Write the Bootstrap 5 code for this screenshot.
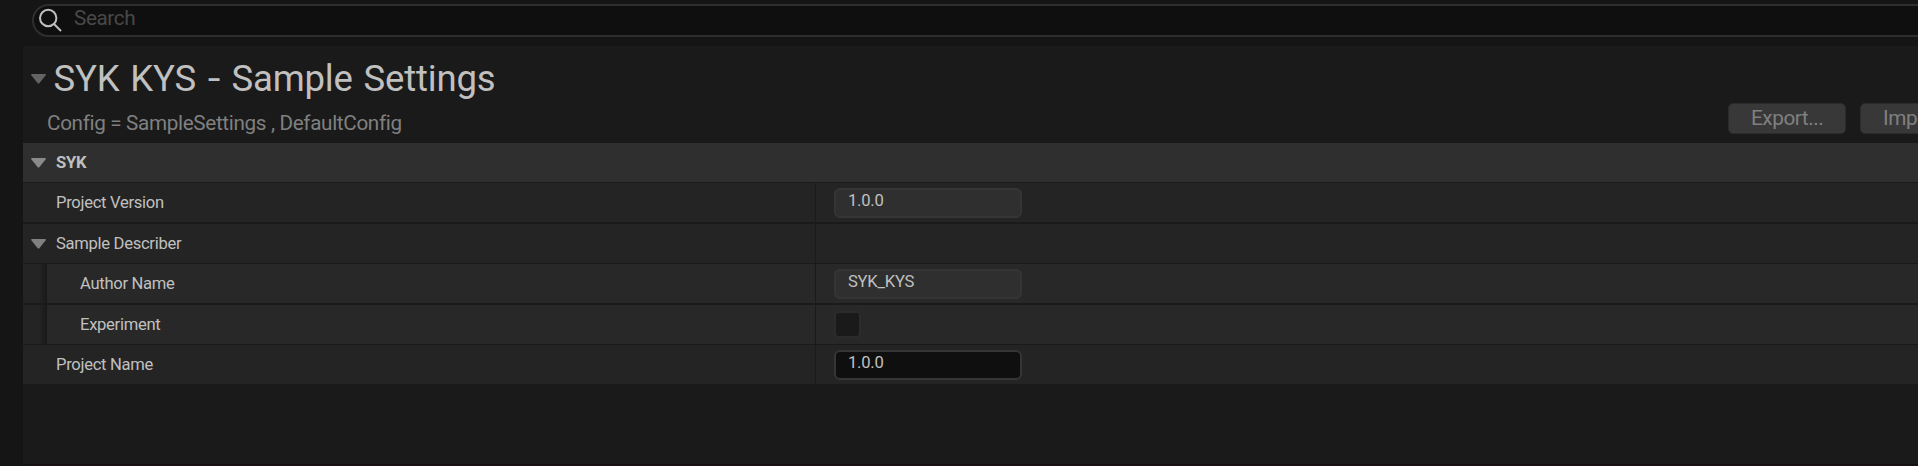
<!DOCTYPE html>
<html lang="en" data-bs-theme="dark">
<head>
<meta charset="utf-8">
<title>Sample Settings</title>
<link rel="stylesheet" href="https://cdn.jsdelivr.net/npm/bootstrap@5.3.0/dist/css/bootstrap.min.css">
<style>
body{background:#151515;font-family:Roboto,sans-serif;color:#c0c0c0;height:466px;overflow:hidden}
.search-box{margin:4px -20px 0 32px;height:33px;border:2px solid #2e2e2e;border-radius:17px;background:#0f0f0f;padding-left:5px}
.search-icon{margin:2px 0 0 -.5px}
.search-box input{background:transparent;color:#575757;font-size:20.7px;letter-spacing:-.4px;line-height:24px;height:24px;margin-left:11.5px;padding:0;width:600px}
.search-box input::placeholder{color:#484848;opacity:1}
.settings-panel{margin:9px 0 0 23px;height:419px;background:#1a1a1a;border-bottom:1px solid #170f12}
.panel-head{height:97px}
.page-title{font-size:36.5px;line-height:44px;letter-spacing:-.16px;word-spacing:1.8px;margin:11px 0 0 7.5px;color:#c0c0c0}
.title-dash{display:inline-block;transform:scaleX(1.25);margin:0 1.7px 0 2.5px}
.config-line{font-size:20.7px;line-height:24px;letter-spacing:-.34px;margin:10px 0 0 24px;color:#808080}
.tool-btn{height:31px;background:#383838;border:1px solid #2b2b2b;border-radius:5px;color:#808080;font-size:20.7px;letter-spacing:-.42px;line-height:27px;padding:0 0 0 22px;width:118px;text-align:left;white-space:nowrap}
.head-actions{margin:57px -60px 0 0;gap:14px}
.prop-row{height:39px;background:#242424;font-size:16.6px;letter-spacing:-.3px;margin-bottom:1px}
.prop-row.gap-wide{margin-bottom:2px}
.prop-row.category{background:#2f2f2f;font-weight:700}
.prop-row.nested{background:#282828}
.prop-name{width:792px;padding-left:33px}
.prop-name span{padding-top:2px}
.with-arrow{padding-left:7.5px}
.nested .prop-name{padding-left:0}
.indent{width:24px;background:linear-gradient(to right,#242424 16px,#191919);margin-right:33px}
.prop-value{border-left:1px solid #1a1a1a;padding-left:18px}
.value-box{width:188px;height:30px;border:2px solid #353535;border-radius:6px;background:#2f2f2f;color:#c0c0c0;font-size:16.6px;letter-spacing:-.25px;line-height:20px;padding:0 0 5px 12px}
.value-box.editable{background:#0f0f0f}
.value-check{width:27px;height:27px;border:2px solid #2b2b2b;border-radius:5px;background-color:#1a1a1a;margin:0}
.arrow{width:15px;height:10px;margin-right:10.5px}
.page-title .arrow{margin-right:8px}
</style>
</head>
<body>
<div class="search-box d-flex">
  <svg width="24" height="24" viewBox="0 0 24 24" fill="none" stroke="#c0c0c0" stroke-width="2" class="search-icon flex-shrink-0"><circle cx="9.2" cy="10" r="8.2"/><path d="M15 16l7 7"/></svg>
  <input type="text" class="border-0" placeholder="Search">
</div>
<main class="settings-panel">
  <header class="panel-head d-flex justify-content-between">
    <div>
      <h1 class="page-title fw-normal d-flex align-items-center"><svg class="arrow" viewBox="0 0 15 10"><path fill="#646464" d="M1 0h13q1.500 0 .5 1.500L8.500 9q-1 1.200-2 0L.5 1.500Q-.5 0 1 0z"/></svg><span>SYK KYS <span class="title-dash">-</span> Sample Settings</span></h1>
      <p class="config-line mb-0">Config = SampleSettings , DefaultConfig</p>
    </div>
    <div class="head-actions d-flex">
      <button class="btn tool-btn">Export...</button>
      <button class="btn tool-btn">Import...</button>
    </div>
  </header>
  <section>
    <div class="prop-row category d-flex"><div class="prop-name with-arrow d-flex align-items-center"><svg class="arrow" viewBox="0 0 15 10"><path fill="#8a8a8a" d="M1 0h13q1.500 0 .5 1.500L8.500 9q-1 1.200-2 0L.5 1.500Q-.5 0 1 0z"/></svg><span>SYK</span></div></div>
    <div class="prop-row gap-wide d-flex"><div class="prop-name d-flex align-items-center"><span>Project Version</span></div><div class="prop-value d-flex align-items-center flex-grow-1"><input class="value-box" value="1.0.0" readonly></div></div>
    <div class="prop-row d-flex"><div class="prop-name with-arrow d-flex align-items-center"><svg class="arrow" viewBox="0 0 15 10"><path fill="#808080" d="M1 0h13q1.500 0 .5 1.500L8.500 9q-1 1.200-2 0L.5 1.500Q-.5 0 1 0z"/></svg><span>Sample Describer</span></div><div class="prop-value flex-grow-1"></div></div>
    <div class="prop-row nested gap-wide d-flex"><div class="prop-name d-flex align-items-center"><div class="indent h-100"></div><span>Author Name</span></div><div class="prop-value d-flex align-items-center flex-grow-1"><input class="value-box" value="SYK_KYS" readonly></div></div>
    <div class="prop-row nested d-flex"><div class="prop-name d-flex align-items-center"><div class="indent h-100"></div><span>Experiment</span></div><div class="prop-value d-flex align-items-center flex-grow-1"><input type="checkbox" class="form-check-input value-check"></div></div>
    <div class="prop-row d-flex"><div class="prop-name d-flex align-items-center"><span>Project Name</span></div><div class="prop-value d-flex align-items-center flex-grow-1"><input class="value-box editable" value="1.0.0"></div></div>
  </section>
</main>
<script src="https://cdn.jsdelivr.net/npm/bootstrap@5.3.0/dist/js/bootstrap.bundle.min.js"></script>
</body>
</html>
